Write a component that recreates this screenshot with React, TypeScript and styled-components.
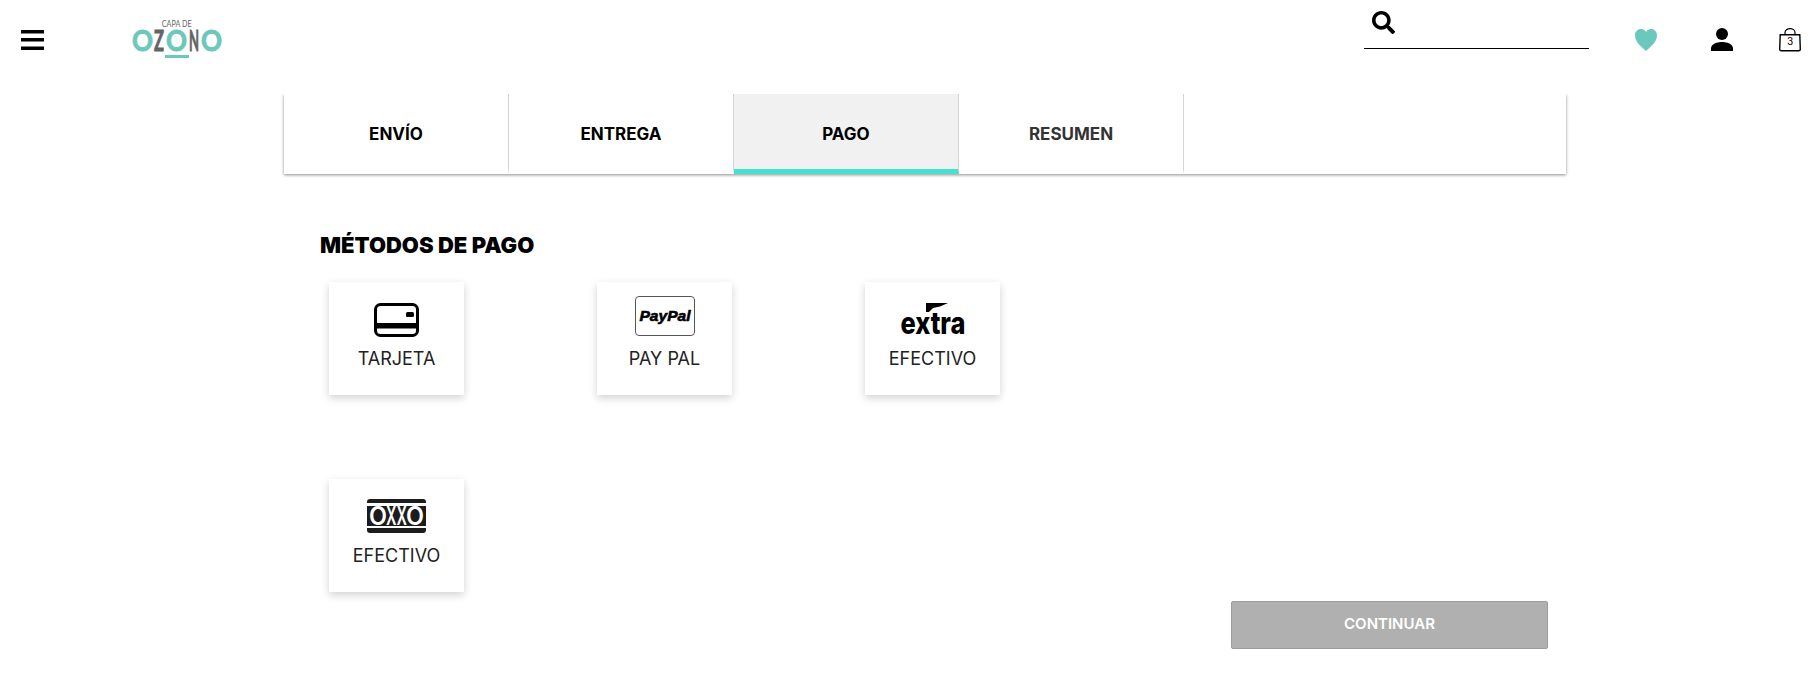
import React from 'react';
import styled, { createGlobalStyle } from 'styled-components';
import { FaSearch } from 'react-icons/fa';

const GlobalStyle = createGlobalStyle`
    html, body {
        margin: 0;
        padding: 0;
        background: #fff;
        font-family: "Inter", "Liberation Sans", sans-serif;
    }
`;

const Page = styled.div`
    width: 1820px;
    height: 682px;
    overflow: hidden;
`;

const Header = styled.header`
    position: relative;
    z-index: 2;
    height: 94px;
    background: #fff;
    display: flex;
    justify-content: space-between;
`;

const HeaderLeft = styled.div`
    display: flex;
    padding: 30px 0 0 21px;
`;

const Logo = styled.div`
    margin-left: 88px;
    margin-top: -12px;
    width: 90px;
    display: flex;
    flex-direction: column;
    align-items: center;
`;

const LogoCaption = styled.span`
    font-family: "Lato", sans-serif;
    font-size: 10px;
    line-height: 11px;
    color: #666;
    white-space: nowrap;
    transform: scaleX(0.72);
`;

const LogoName = styled.svg`
    display: block;
    width: 90px;
    height: 22px;
    margin-top: 2px;
    overflow: visible;
`;

const LogoLetter = styled.text<{ $teal?: boolean }>`
    font-family: "Lato", sans-serif;
    font-size: 28px;
    font-weight: 700;
    fill: ${p => (p.$teal ? '#6cc8bc' : '#646464')};
    stroke: ${p => (p.$teal ? '#6cc8bc' : '#646464')};
    stroke-width: 0.9px;
`;

const LogoBar = styled.div`
    width: 24px;
    height: 3px;
    margin-top: 2px;
    background: #6cc8bc;
`;

const HeaderRight = styled.div`
    display: flex;
    align-items: flex-start;
`;

const SearchBox = styled.div`
    width: 225px;
    height: 49px;
    padding: 11px 0 0 8px;
    box-sizing: border-box;
    border-bottom: 1px solid #000;
    margin-right: 46px;
`;

const HeaderIcon = styled.div<{ $gap: number }>`
    margin: 28px ${p => p.$gap}px 0 0;
    display: flex;
`;

const BagCount = styled.text`
    font-size: 10px;
    font-family: "Inter", sans-serif;
`;

const Content = styled.main`
    width: 1282px;
    margin-left: 284px;
`;

const Tabs = styled.nav`
    display: flex;
    height: 80px;
    background: #fff;
    box-shadow: 0 1px 3px rgba(0, 0, 0, 0.45);
`;

const Tab = styled.div<{ $active?: boolean; $muted?: boolean }>`
    width: 225px;
    box-sizing: border-box;
    display: flex;
    align-items: center;
    justify-content: center;
    font-size: 17px;
    font-weight: 700;
    padding-top: 4px;
    color: ${p => (p.$muted ? '#333' : '#000')};
    background: ${p => (p.$active ? '#f1f1f1' : '#fff')};
    border-right: 1px solid #d4d4d4;
    border-bottom: 5px solid ${p => (p.$active ? '#45e0cf' : 'transparent')};
`;

const Title = styled.h2`
    margin: 58px 0 0 36px;
    font-size: 22px;
    line-height: 26px;
    font-weight: 900;
    color: #000;
`;

const Methods = styled.div`
    display: grid;
    grid-template-columns: repeat(3, 135px);
    grid-auto-rows: 113px;
    column-gap: 133px;
    row-gap: 84px;
    margin: 24px 0 0 45px;
`;

const Method = styled.div`
    background: #fff;
    box-shadow: 0 3px 8px rgba(0, 0, 0, 0.18);
    display: flex;
    flex-direction: column;
    align-items: center;
    padding-top: 14px;
    box-sizing: border-box;
`;

const MethodIcon = styled.svg`
    display: block;
    width: 76px;
    height: 42px;
    overflow: visible;
`;

const MethodLabel = styled.span`
    margin-top: 10px;
    font-size: 18px;
    line-height: 22px;
    color: #222;
`;

const PayPalText = styled.text`
    font-family: "Liberation Sans", sans-serif;
    font-size: 15px;
    font-style: italic;
    font-weight: 700;
    stroke: #000;
    stroke-width: 0.6px;
`;

const ExtraText = styled.text`
    font-family: "Inter", sans-serif;
    font-size: 31px;
    font-weight: 800;
`;

const OxxoText = styled.text`
    font-family: "Inter", sans-serif;
    font-size: 25px;
    font-weight: 600;
    fill: #fff;
`;

const Footer = styled.div`
    display: flex;
    justify-content: flex-end;
    margin: 9px 18px 0 0;
`;

const ContinueButton = styled.button`
    width: 317px;
    height: 48px;
    padding: 0 0 4px;
    background: #b0b0b0;
    border: 1px solid #9c9c9c;
    border-radius: 2px;
    color: #fff;
    font-family: inherit;
    font-size: 15px;
    font-weight: 600;
`;

const BarsIcon = () => (
    <svg width="23" height="20" viewBox="0 0 23 20">
        <path d="M0 0h23v3.500H0zM0 8h23v3.500H0zM0 16.500h23V20H0z" fill="#000" />
    </svg>
);

const HeartIcon = () => (
    <svg width="22" height="24" viewBox="0 0 22 24">
        <path d="M11 23C6 18.500 0 14 0 7.500 0 3.500 2.800 1 6 1c2.200 0 4 1.200 5 3 1-1.800 2.800-3 5-3 3.200 0 6 2.500 6 6.500C22 14 16 18.500 11 23z" fill="#6cc8bc" />
    </svg>
);

const UserIcon = () => (
    <svg width="22" height="24" viewBox="0 0 22 24">
        <circle cx="11" cy="6" r="6" fill="#000" />
        <path d="M0 23v-2.500C0 16 6 14 11 14s11 2 11 6.500V23z" fill="#000" />
    </svg>
);

const BagIcon = () => (
    <svg width="22" height="24" viewBox="0 0 22 24">
        <path d="M1.200 6.700h19.600l.5 14.500a1.500 1.500 0 0 1-1.500 1.500H2.200a1.500 1.500 0 0 1-1.500-1.500z" fill="none" stroke="#000" strokeWidth="1.400" />
        <path d="M6 6.700V4.500a5 3.800 0 0 1 10 0v2.200" fill="none" stroke="#000" strokeWidth="1.200" />
        <BagCount x="11" y="16.500" textAnchor="middle">3</BagCount>
    </svg>
);

const CardLogo = () => (
    <MethodIcon viewBox="0 0 76 42">
        <rect x="16.500" y="8.500" width="42" height="31" rx="5" fill="none" stroke="#000" strokeWidth="3" />
        <rect x="16" y="27" width="44" height="5.500" fill="#000" />
        <rect x="47" y="16" width="8" height="5" rx="1.500" fill="#000" />
    </MethodIcon>
);

const PayPalLogo = () => (
    <MethodIcon viewBox="0 0 76 42">
        <rect x="8.500" y="0.500" width="59" height="39" rx="3.500" fill="#fff" stroke="#555" />
        <PayPalText x="38" y="25" textAnchor="middle" textLength="51" lengthAdjust="spacingAndGlyphs">PayPal</PayPalText>
    </MethodIcon>
);

const ExtraLogo = () => (
    <MethodIcon viewBox="0 0 76 42">
        <path d="M31 7h22l-8 3.500-7 1.500-4 4h-3z" fill="#000" />
        <ExtraText x="38" y="38" textAnchor="middle" textLength="65" lengthAdjust="spacingAndGlyphs">extra</ExtraText>
    </MethodIcon>
);

const OxxoLogo = () => (
    <MethodIcon viewBox="0 0 76 42">
        <rect x="8" y="6" width="59" height="34" rx="3" fill="#1c1c1c" />
        <rect x="8" y="10" width="59" height="3" fill="#fff" />
        <rect x="8" y="33" width="59" height="2" fill="#fff" />
        <OxxoText x="10" y="32" textLength="18" lengthAdjust="spacingAndGlyphs">O</OxxoText>
        <OxxoText x="27" y="32" textLength="21" lengthAdjust="spacingAndGlyphs">XX</OxxoText>
        <OxxoText x="47" y="32" textLength="18" lengthAdjust="spacingAndGlyphs">O</OxxoText>
    </MethodIcon>
);

const methods = [
    { label: 'TARJETA', logo: <CardLogo /> },
    { label: 'PAY PAL', logo: <PayPalLogo /> },
    { label: 'EFECTIVO', logo: <ExtraLogo /> },
    { label: 'EFECTIVO', logo: <OxxoLogo /> },
];

export default function App() {
    return <Page>
        <GlobalStyle />
        <Header>
            <HeaderLeft>
                <BarsIcon />
                <Logo>
                    <LogoCaption>CAPA DE</LogoCaption>
                    <LogoName viewBox="0 0 90 22">
                        <LogoLetter $teal x="0" y="20" textLength="21" lengthAdjust="spacingAndGlyphs">O</LogoLetter>
                        <LogoLetter x="22" y="20" textLength="10" lengthAdjust="spacingAndGlyphs">Z</LogoLetter>
                        <LogoLetter $teal x="34" y="20" textLength="21" lengthAdjust="spacingAndGlyphs">O</LogoLetter>
                        <LogoLetter x="57" y="20" textLength="10" lengthAdjust="spacingAndGlyphs">N</LogoLetter>
                        <LogoLetter $teal x="69" y="20" textLength="21" lengthAdjust="spacingAndGlyphs">O</LogoLetter>
                    </LogoName>
                    <LogoBar />
                </Logo>
            </HeaderLeft>
            <HeaderRight>
                <SearchBox><FaSearch size={23} color="#000" /></SearchBox>
                <HeaderIcon $gap={54}><HeartIcon /></HeaderIcon>
                <HeaderIcon $gap={46}><UserIcon /></HeaderIcon>
                <HeaderIcon $gap={19}><BagIcon /></HeaderIcon>
            </HeaderRight>
        </Header>
        <Content>
            <Tabs>
                <Tab>ENVÍO</Tab>
                <Tab>ENTREGA</Tab>
                <Tab $active>PAGO</Tab>
                <Tab $muted>RESUMEN</Tab>
            </Tabs>
            <Title>MÉTODOS DE PAGO</Title>
            <Methods>
                {methods.map((m, i) => <Method key={i}>
                    {m.logo}
                    <MethodLabel>{m.label}</MethodLabel>
                </Method>)}
            </Methods>
            <Footer>
                <ContinueButton>CONTINUAR</ContinueButton>
            </Footer>
        </Content>
    </Page>;
}
